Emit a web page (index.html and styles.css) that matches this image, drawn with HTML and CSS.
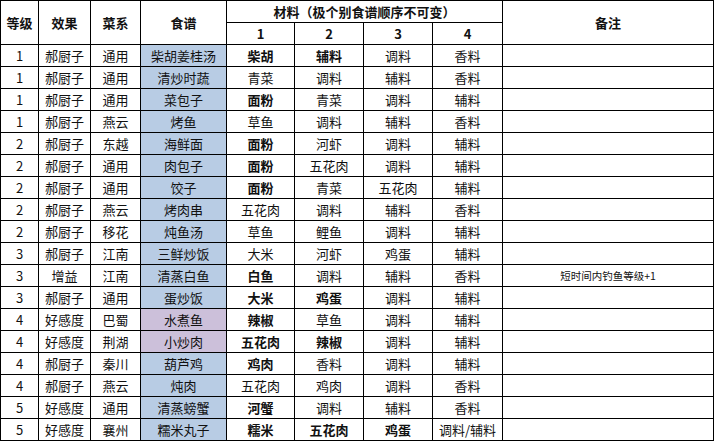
FILE: index.html
```html
<!DOCTYPE html>
<html lang="zh">
<head>
<meta charset="utf-8">
<title>食谱</title>
<link rel="stylesheet" href="styles.css">
</head>
<body>
<table class="sheet">
  <colgroup>
    <col class="c-lv"><col class="c-eff"><col class="c-cat"><col class="c-dish">
    <col class="c-m1"><col class="c-m2"><col class="c-m3"><col class="c-m4"><col class="c-note">
  </colgroup>
  <thead>
    <tr class="hrow">
      <th rowspan="2">等级</th>
      <th rowspan="2">效果</th>
      <th rowspan="2">菜系</th>
      <th rowspan="2">食谱</th>
      <th colspan="4">材料（极个别食谱顺序不可变）</th>
      <th rowspan="2">备注</th>
    </tr>
    <tr class="hrow">
      <th>1</th><th>2</th><th>3</th><th>4</th>
    </tr>
  </thead>
  <tbody>
    <tr><td>1</td><td>郝厨子</td><td>通用</td><td class="dish">柴胡姜桂汤</td><td class="b">柴胡</td><td class="b">辅料</td><td>调料</td><td>香料</td><td></td></tr>
    <tr><td>1</td><td>郝厨子</td><td>通用</td><td class="dish">清炒时蔬</td><td>青菜</td><td>调料</td><td>辅料</td><td>香料</td><td></td></tr>
    <tr><td>1</td><td>郝厨子</td><td>通用</td><td class="dish">菜包子</td><td class="b">面粉</td><td>青菜</td><td>调料</td><td>辅料</td><td></td></tr>
    <tr><td>1</td><td>郝厨子</td><td>燕云</td><td class="dish">烤鱼</td><td>草鱼</td><td>调料</td><td>辅料</td><td>香料</td><td></td></tr>
    <tr><td>2</td><td>郝厨子</td><td>东越</td><td class="dish">海鲜面</td><td class="b">面粉</td><td>河虾</td><td>调料</td><td>辅料</td><td></td></tr>
    <tr><td>2</td><td>郝厨子</td><td>通用</td><td class="dish">肉包子</td><td class="b">面粉</td><td>五花肉</td><td>调料</td><td>辅料</td><td></td></tr>
    <tr><td>2</td><td>郝厨子</td><td>通用</td><td class="dish">饺子</td><td class="b">面粉</td><td>青菜</td><td>五花肉</td><td>辅料</td><td></td></tr>
    <tr><td>2</td><td>郝厨子</td><td>燕云</td><td class="dish">烤肉串</td><td>五花肉</td><td>调料</td><td>辅料</td><td>香料</td><td></td></tr>
    <tr><td>2</td><td>郝厨子</td><td>移花</td><td class="dish">炖鱼汤</td><td>草鱼</td><td>鲤鱼</td><td>调料</td><td>辅料</td><td></td></tr>
    <tr><td>3</td><td>郝厨子</td><td>江南</td><td class="dish">三鲜炒饭</td><td>大米</td><td>河虾</td><td>鸡蛋</td><td>辅料</td><td></td></tr>
    <tr><td>3</td><td>增益</td><td>江南</td><td class="dish">清蒸白鱼</td><td class="b">白鱼</td><td>调料</td><td>辅料</td><td>香料</td><td class="note">短时间内钓鱼等级+1</td></tr>
    <tr><td>3</td><td>郝厨子</td><td>通用</td><td class="dish">蛋炒饭</td><td class="b">大米</td><td class="b">鸡蛋</td><td>调料</td><td>辅料</td><td></td></tr>
    <tr><td>4</td><td>好感度</td><td>巴蜀</td><td class="dish alt">水煮鱼</td><td class="b">辣椒</td><td>草鱼</td><td>调料</td><td>辅料</td><td></td></tr>
    <tr><td>4</td><td>好感度</td><td>荆湖</td><td class="dish alt">小炒肉</td><td class="b">五花肉</td><td class="b">辣椒</td><td>调料</td><td>辅料</td><td></td></tr>
    <tr><td>4</td><td>郝厨子</td><td>秦川</td><td class="dish">葫芦鸡</td><td class="b">鸡肉</td><td>香料</td><td>调料</td><td>辅料</td><td></td></tr>
    <tr><td>4</td><td>郝厨子</td><td>燕云</td><td class="dish">炖肉</td><td>五花肉</td><td>鸡肉</td><td>调料</td><td>香料</td><td></td></tr>
    <tr><td>5</td><td>好感度</td><td>通用</td><td class="dish">清蒸螃蟹</td><td class="b">河蟹</td><td>调料</td><td>辅料</td><td>香料</td><td></td></tr>
    <tr><td>5</td><td>好感度</td><td>襄州</td><td class="dish">糯米丸子</td><td class="b">糯米</td><td class="b">五花肉</td><td class="b">鸡蛋</td><td>调料/辅料</td><td></td></tr>
  </tbody>
</table>
</body>
</html>
```

FILE: styles.css
```css
html, body {
  margin: 0;
  padding: 0;
  background: #ffffff;
}

.sheet {
  border-collapse: collapse;
  table-layout: fixed;
  width: 714px;
  font-family: "Noto Sans CJK SC", "Noto Sans", sans-serif;
  font-size: 13px;
  color: #111111;
}

.c-lv { width: 38px; }
.c-eff { width: 52px; }
.c-cat { width: 50px; }
.c-dish { width: 86px; }
.c-m1 { width: 68px; }
.c-m2 { width: 69px; }
.c-m3 { width: 69px; }
.c-m4 { width: 70px; }
.c-note { width: 211px; }

.sheet th,
.sheet td {
  border: 1px solid #000000;
  padding: 0;
  text-align: center;
  vertical-align: middle;
  line-height: 16px;
  white-space: nowrap;
  overflow: hidden;
}

.sheet th {
  font-weight: bold;
}

.sheet tr {
  height: 22px;
}

.sheet .dish {
  background: #b8cce4;
}

.sheet .dish.alt {
  background: #ccc0da;
}

.sheet .b {
  font-weight: bold;
}

.sheet .note {
  font-size: 10.5px;
}
```
